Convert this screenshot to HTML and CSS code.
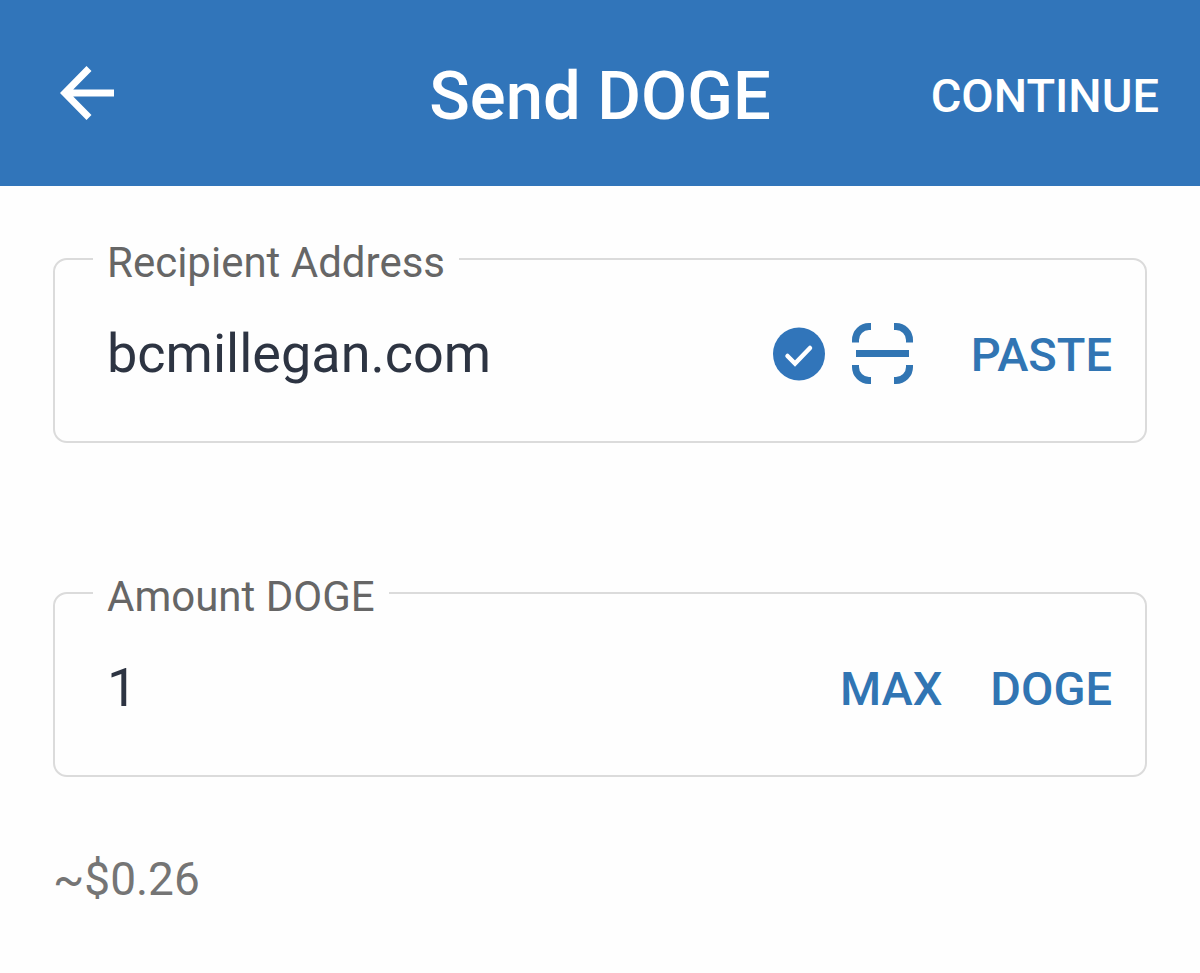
FILE: index.html
```
<!DOCTYPE html>
<html lang="en">
<head>
  <meta charset="UTF-8">
  <meta name="viewport" content="width=device-width, initial-scale=1.0">
  <title>Send DOGE</title>
  <link rel="stylesheet" href="styles.css">
</head>
<body>
  <header class="header">
    <button type="button" class="back" aria-label="Back">
      <svg width="54" height="54" viewBox="0 0 54 54" fill="none" stroke="currentColor" stroke-width="7">
        <path d="M29 2.5L4.8 27L29 51.5M5 27h49"/>
      </svg>
    </button>
    <h1>Send DOGE</h1>
    <button type="submit" form="sendForm" class="continue">CONTINUE</button>
  </header>

  <main>
    <form id="sendForm" class="form">
      <fieldset class="field">
        <legend><label for="address">Recipient Address</label></legend>
        <div class="row">
          <input type="text" id="address" value="bcmillegan.com">
          <div class="icons">
            <svg width="52" height="54" viewBox="0 0 52 54" role="img" aria-label="Valid address">
              <ellipse cx="26" cy="27" rx="26" ry="26.5" fill="#3175ba"/>
              <path d="M14.5 29L22 36.5L37 21" fill="none" stroke="#fff" stroke-width="4.5" stroke-linecap="round"/>
            </svg>
            <button type="button" aria-label="Scan QR code">
              <svg width="61" height="61" viewBox="0 0 61 61" fill="none" stroke="currentColor" stroke-width="7">
                <path d="M3.5 19.5V17A13.5 13.5 0 0 1 17 3.5h2M42 3.5h2A13.5 13.5 0 0 1 57.5 17v2.5M57.5 42v2A13.5 13.5 0 0 1 44 57.5h-2M19 57.5h-2A13.5 13.5 0 0 1 3.5 44v-2M4 30.500h53"/>
              </svg>
            </button>
          </div>
          <button type="button">PASTE</button>
        </div>
      </fieldset>

      <fieldset class="field">
        <legend><label for="amount">Amount DOGE</label></legend>
        <div class="row">
          <input type="text" id="amount" inputmode="decimal" value="1">
          <button type="button">MAX</button>
          <button type="button">DOGE</button>
        </div>
      </fieldset>

      <p class="fiat">~$0.26</p>
    </form>
  </main>
</body>
</html>
```

FILE: styles.css
```
* {
  box-sizing: border-box;
}

body {
  margin: 0;
  background: #fefefe;
  font-family: Roboto, "Liberation Sans", sans-serif;
}

button {
  padding: 0;
  border: none;
  background: none;
  color: #3175b3;
  font-family: inherit;
  font-size: 47px;
  font-weight: 500;
  line-height: 56px;
  cursor: pointer;
}

svg {
  display: block;
}

/* Header */
.header {
  display: grid;
  grid-template-columns: 1fr auto 1fr;
  align-items: center;
  min-height: 186px;
  padding: 6px 41px 0;
  background: #3175ba;
  color: #fff;
}

.header h1 {
  margin: 0;
  font-size: 67px;
  font-weight: 500;
  line-height: 80px;
}

.header button {
  color: #fff;
}

.back {
  justify-self: start;
  padding: 0 19px 6px;
}

.continue {
  justify-self: end;
}

/* Form */
.form {
  padding: 45px 53px;
}

.field {
  min-width: 0;
  margin: 0;
  padding: 0 33px 21px 38px;
  border: 2px solid #dbdbdb;
  border-radius: 14px;
}

.field + .field {
  margin-top: 122px;
}

.field legend {
  padding: 8px 14px 0;
  color: #666;
  font-size: 42px;
  line-height: 48px;
}

.row {
  display: flex;
  align-items: center;
  gap: 48px;
  min-height: 133px;
}

.row > button {
  padding-top: 3px;
}

.row input {
  flex: 1;
  min-width: 0;
  padding: 0 14px;
  border: none;
  outline: none;
  background: none;
  color: #2d3442;
  font-family: inherit;
  font-size: 54px;
  line-height: 64px;
}

.icons {
  display: flex;
  align-items: center;
  gap: 27px;
  margin-right: 10px;
}

.fiat {
  margin: 74px 0 0;
  color: #757575;
  font-size: 46px;
  line-height: 56px;
}
```
